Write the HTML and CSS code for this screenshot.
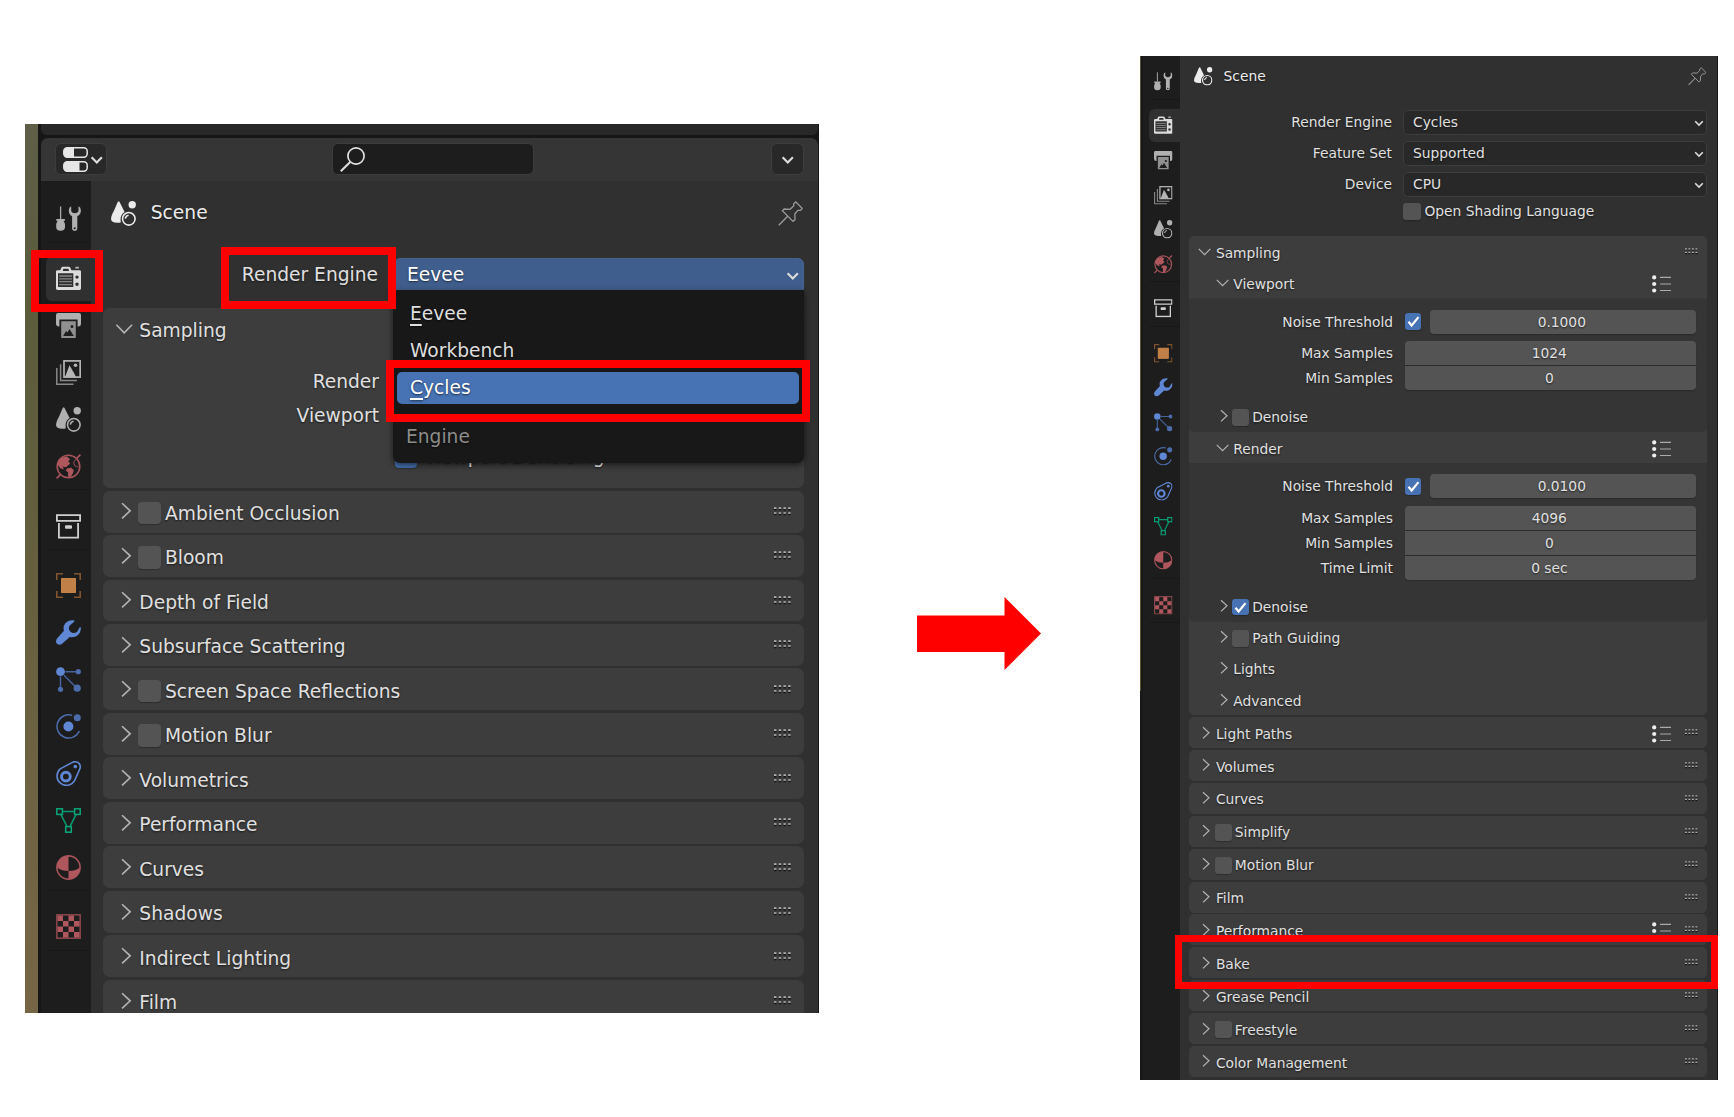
FILE: index.html
```html
<!DOCTYPE html>
<html lang="en">
<head>
    <meta charset="UTF-8">
    <meta name="viewport" content="width=device-width, initial-scale=1.0">
    <title>Render Engine - Cycles</title>
    <link rel="stylesheet" href="styles.css">
</head>
<body>
    <!-- icons -->
    <svg class="defs" width="0" height="0">
        <symbol id="right" viewBox="0 0 12 12" overflow="visible"><path d="M3 .2 L9 5.8 L3 11.4" fill="none" stroke="#b4b4b4" stroke-width="1.2"/></symbol>
        <symbol id="down" viewBox="0 0 12 12" overflow="visible"><path d="M-1.2 2.8 L4.6 8.7 L10.4 2.8" fill="none" stroke="#b4b4b4" stroke-width="1.2"/></symbol>
        <symbol id="arrow" viewBox="0 0 10 10"><path d="M1.2 3.2 L5 7 L8.8 3.2" fill="none" stroke="#dcdcdc" stroke-width="1.6"/></symbol>
        <symbol id="check" viewBox="0 0 16 16"><path d="M3.4 8.4 L6.4 12 L13 4" fill="none" stroke="#fff" stroke-width="2.1"/></symbol>
        <symbol id="grip" viewBox="0 0 13 7">
            <path d="M0 2H13M0 5.6H13" stroke="#161616" stroke-width="1.2" stroke-dasharray="1.8 1.7"/>
            <path d="M0 .8H13M0 4.4H13" stroke="#b0b0b0" stroke-width="1.2" stroke-dasharray="1.8 1.7"/>
        </symbol>
        <symbol id="list" viewBox="0 0 19 18">
            <g fill="#eee"><circle cx="2.2" cy="2.4" r="2.1"/><circle cx="2.2" cy="9" r="2.1"/><circle cx="2.2" cy="15.5" r="2.1"/></g>
            <path d="M8 2.4H19M8 9H19M8 15.5H19" stroke="#aaa" stroke-width="1.2"/>
        </symbol>
        <symbol id="editor" viewBox="0 0 25 25">
            <g fill="none" stroke="#e6e6e6" stroke-width="1.5"><rect x=".8" y=".8" width="23.4" height="9.4" rx="3.4"/><rect x=".8" y="14.8" width="23.4" height="9.4" rx="3.4"/></g>
            <path d="M4 .8H11V10.2H4Q.8 10 .8 5.5Q.8 1 4 .8ZM4 14.8H16.5V24.2H4Q.8 24 .8 19.5Q.8 15 4 14.8Z" fill="#e6e6e6"/>
        </symbol>
        <symbol id="search" viewBox="0 0 25 25"><circle cx="16" cy="9" r="8.1" fill="none" stroke="#e0e0e0" stroke-width="1.7"/><path d="M10.2 15 L.8 24.2" stroke="#e0e0e0" stroke-width="2"/></symbol>
        <symbol id="pin" viewBox="0 0 25 25">
            <path d="M17.8 1 L24.2 7.3 L22.6 9.3 L19.8 9.3 L16.8 13 L17 18.6 L15 20.4 L4.4 9.8 L6.2 8 L12 8.3 L15.7 5 L15.7 2.8 Z" fill="none" stroke="#999" stroke-width="1.3"/>
            <path d="M9.6 15.2 L.8 24.2" stroke="#999" stroke-width="1.4"/>
        </symbol>
        <symbol id="tool" viewBox="0 0 25 25">
            <path d="M4.6 .5V13" stroke="#aaa" stroke-width="1.3"/>
            <path d="M.3 13H8.9V14.8H7.6L9 18V21Q9 24.8 4.6 24.8Q.2 24.8 .2 21V18L1.6 14.8H.3Z" fill="#b0b0b0"/>
            <path fill-rule="evenodd" d="M15.2 .2Q12.8 1.2 12.8 4.6Q12.8 8.6 16.1 10.2V22.2Q16.2 24.8 18.7 24.8Q21.2 24.8 21.3 22.2V10.2Q24.9 8.6 24.9 4.6Q24.9 1.2 22.5 .2V5.2Q21.5 7.2 18.8 7.2Q16.2 7.2 15.2 5.2ZM18.7 21.2A1 1 0 1 1 18.7 23.2A1 1 0 1 1 18.7 21.2Z" fill="#b0b0b0"/>
        </symbol>
        <symbol id="render" viewBox="0 0 25 25">
            <path fill-rule="evenodd" d="M1.5 4.2H4.3L5.5 1.5Q5.8 .8 6.8 .8H12.8Q13.8 .8 14.2 1.5L15.4 4.2H23.5Q25 4.2 25 5.6V22.6Q25 24 23.5 24H1.5Q0 24 0 22.6V5.6Q0 4.2 1.5 4.2ZM7.3 2.8L6.8 5H13L12.5 2.8ZM2 7.2V21H17.3V7.2ZM21 9.4A1.7 1.7 0 1 0 21 12.8A1.7 1.7 0 1 0 21 9.4ZM21 16.6A1.7 1.7 0 1 0 21 20A1.7 1.7 0 1 0 21 16.6Z" fill="#dcdcdc"/>
            <path d="M3.2 10H16M3.2 12.8H16M3.2 15.6H16M3.2 18.6H16" stroke="#858585" stroke-width="1.3"/>
            <rect x="19.3" y=".8" width="3.6" height="1.7" fill="#b5b5b5"/>
        </symbol>
        <symbol id="output" viewBox="0 0 25 25">
            <path d="M2 0H23Q25 0 25 2V10.5Q25 13.5 22 13.5H21.6V6.5H3.4V13.5H3Q0 13.5 0 10.5V2Q0 0 2 0Z" fill="#b0b0b0"/>
            <path fill-rule="evenodd" d="M5.2 8.2H19.8V25H5.2ZM7.2 23H17.8L13.5 16L11.5 19.5L10 18ZM16 12A1.5 1.5 0 1 0 16 15A1.5 1.5 0 1 0 16 12Z" fill="#909090"/>
        </symbol>
        <symbol id="layers" viewBox="0 0 25 25">
            <rect x="8" y=".9" width="16.2" height="16.2" fill="none" stroke="#b5b5b5" stroke-width="1.7"/>
            <path d="M9 17L13.5 5.2L18 13L20 17Z" fill="#b5b5b5"/><circle cx="19.5" cy="5.3" r="1.8" fill="#b5b5b5"/>
            <path d="M4.6 4.2V20.6H21M.8 8V24.2H17.5" fill="none" stroke="#888" stroke-width="1.5"/>
        </symbol>
        <symbol id="scene" viewBox="0 0 25 25">
            <path d="M7.6 .3Q8.5 .3 9.2 2.2L13.6 11Q9.2 13.8 9.6 19.2L9.8 21.5Q0 22.5 0 18Q0 15 3.3 9L6.4 1.8Q6.8 .3 7.6 .3Z" fill="currentColor"/>
            <circle cx="21.2" cy="3.8" r="3.7" fill="currentColor"/>
            <circle cx="17.8" cy="17.8" r="6.3" fill="none" stroke="currentColor" stroke-width="1.6"/>
            <path d="M14.3 17.6Q14.8 14.6 17.6 14.2" fill="none" stroke="currentColor" stroke-width="1.6"/>
        </symbol>
        <symbol id="world" viewBox="0 0 25 25">
            <circle cx="12.5" cy="12.5" r="11.3" fill="none" stroke="#a6545a" stroke-width="1.6"/>
            <path d="M.6 24.4L4.6 20.4M20.4 4.6L24.4 .6" stroke="#a6545a" stroke-width="1.7"/>
            <path d="M6 3.8L11 2.6L14 5.2L12.2 7.2L14.2 9.4L10 13.3L6.5 12.5L8.2 15.5L4 14L1.4 10Q2.4 6 6 3.8Z" fill="#b0575e"/>
            <path d="M11 14.4L15.2 13.8L17.8 16.2L16.8 19.5L14.5 23.2L12 22.5L12.2 18.4L9.8 16.4Z" fill="#b0575e"/>
            <path d="M20 5L17.5 8.5L19 12L22.5 13" fill="none" stroke="#7e4348" stroke-width="1.2"/>
        </symbol>
        <symbol id="collection" viewBox="0 0 25 25">
            <path d="M.9 1.2H24.1V6.9H.9ZM2.9 9V23.6H22.1V9" fill="none" stroke="#d0d0d0" stroke-width="1.8"/>
            <rect x="9" y="11.3" width="7" height="3.4" rx="1" fill="#d0d0d0"/>
        </symbol>
        <symbol id="object" viewBox="0 0 25 25">
            <rect x="5.6" y="5.6" width="13.8" height="13.8" fill="#c08048" stroke="#d08a4c"/>
            <path d="M.8 7V.8H7M18 .8H24.2V7M24.2 18V24.2H18M7 24.2H.8V18" fill="none" stroke="#80542f" stroke-width="1.6"/>
        </symbol>
        <symbol id="modifier" viewBox="0 0 25 25">
            <path d="M18.3 .3Q10 -.2 7.8 6Q7.2 8.6 8 10.8L1.2 18.3Q-1 21.5 1 23.8Q3.5 26 6.4 23.5L13.7 16.9Q17 17.6 19.8 16.4Q25 14 25 7.2L23.5 7.5L21 12Q17.5 13.8 14.8 12Q11.5 9 13.8 5.4L18.2 1.8Z" fill="#5f87d3"/>
        </symbol>
        <symbol id="particles" viewBox="0 0 25 25">
            <path d="M4.5 4.7H22M4.5 4.7V22M7 7.2L21 21.2" stroke="#45639c" stroke-width="1.5"/>
            <circle cx="4.5" cy="4.7" r="4.9" fill="#1d1d1d"/><circle cx="4.5" cy="4.7" r="4.4" fill="#5f87d3"/>
            <g fill="#4c6cab"><circle cx="22.3" cy="4.7" r="2.6"/><circle cx="4.5" cy="22.3" r="2.6"/><circle cx="21.2" cy="21.2" r="3.6"/></g>
        </symbol>
        <symbol id="physics" viewBox="0 0 25 25">
            <path d="M16.2 1.4A11.6 11.6 0 1 0 23.3 17" fill="none" stroke="#4c6cab" stroke-width="1.5"/>
            <circle cx="12.4" cy="12.5" r="5" fill="#5f87d3"/><circle cx="21.3" cy="3.8" r="3.5" fill="#4c6cab"/>
        </symbol>
        <symbol id="constraint" viewBox="0 0 25 25">
            <path d="M4.2 7.9L16 1.6Q19.5 -.3 22.5 1.9Q25 4 24 7.6L18.6 19.6A9.4 9.4 0 1 1 4.2 7.9Z" fill="none" stroke="#5f87d3" stroke-width="1.6"/>
            <circle cx="9.9" cy="15.6" r="4.4" fill="none" stroke="#5f87d3" stroke-width="2.9"/>
            <circle cx="19.3" cy="5.6" r="1.8" fill="#5f87d3"/>
        </symbol>
        <symbol id="data" viewBox="0 0 25 25">
            <path d="M3.5 3.5H21.5L12.5 21.5Z" fill="none" stroke="#08996f" stroke-width="1.6"/>
            <g fill="#1d1d1d" stroke="#08a87a" stroke-width="1.5"><rect x=".8" y=".8" width="5.6" height="5.6"/><rect x="18.6" y=".8" width="5.6" height="5.6"/><rect x="9.7" y="18.6" width="5.6" height="5.6"/></g>
        </symbol>
        <symbol id="material" viewBox="0 0 25 25">
            <circle cx="12.5" cy="12.5" r="11.6" fill="none" stroke="#a6545a" stroke-width="1.6"/>
            <path d="M12.5 1V16Q5.5 16 1 12.5Q1.5 1.5 12.5 1ZM12.5 16Q19.5 16 24 12.5Q23.5 23.5 12.5 24Z" fill="#b0575e"/>
        </symbol>
        <symbol id="texture" viewBox="0 0 25 25">
            <rect x=".8" y=".8" width="23.4" height="23.4" fill="none" stroke="#8c474c" stroke-width="1.5"/>
            <path d="M1.5 1.5H7V7H1.5ZM12.5 1.5H18V7H12.5ZM7 7H12.5V12.5H7ZM18 7H23.5V12.5H18ZM1.5 12.5H7V18H1.5ZM12.5 12.5H18V18H12.5ZM7 18H12.5V23.5H7ZM18 18H23.5V23.5H18Z" fill="#b0575e"/>
        </symbol>
    </svg>

    <div class="shot eevee">
        <div class="backdrop"></div>
        <div class="editor">
            <div class="topbar"></div>
            <div class="header">
                <div class="header-btn editor-type"><svg class="tico"><use href="#editor"/></svg><svg class="arr"><use href="#arrow"/></svg></div>
                <div class="search"><svg class="tico"><use href="#search"/></svg></div>
                <div class="header-btn options"><svg class="arr"><use href="#arrow"/></svg></div>
            </div>
            <div class="main">
                <div class="tabs">
                    <div class="tab"><svg><use href="#tool"/></svg></div>
                    <div class="sep"></div>
                    <div class="tab active"><svg><use href="#render"/></svg></div>
                    <div class="tab"><svg><use href="#output"/></svg></div>
                    <div class="tab"><svg><use href="#layers"/></svg></div>
                    <div class="tab"><svg><use href="#scene"/></svg></div>
                    <div class="tab"><svg><use href="#world"/></svg></div>
                    <div class="sep"></div>
                    <div class="tab"><svg><use href="#collection"/></svg></div>
                    <div class="sep"></div>
                    <div class="tab"><svg><use href="#object"/></svg></div>
                    <div class="tab"><svg><use href="#modifier"/></svg></div>
                    <div class="tab"><svg><use href="#particles"/></svg></div>
                    <div class="tab"><svg><use href="#physics"/></svg></div>
                    <div class="tab"><svg><use href="#constraint"/></svg></div>
                    <div class="tab"><svg><use href="#data"/></svg></div>
                    <div class="tab"><svg><use href="#material"/></svg></div>
                    <div class="sep"></div>
                    <div class="tab"><svg><use href="#texture"/></svg></div>
                    <div class="sep"></div>
                </div>
                <div class="content">
                    <div class="title"><svg><use href="#scene"/></svg><span>Scene</span><svg class="pin"><use href="#pin"/></svg></div>
                    <div class="prop engine">
                        <label>Render Engine</label>
                        <div class="select open">
                            <span>Eevee</span><svg class="arr"><use href="#arrow"/></svg>
                            <div class="menu">
                                <div class="item"><u>E</u>evee</div>
                                <div class="item">Workbench</div>
                                <div class="item selected"><u>C</u>ycles</div>
                                <div class="menu-title">Engine</div>
                            </div>
                        </div>
                    </div>
                    <div class="panel sampling">
                        <div class="row"><svg class="chev"><use href="#down"/></svg><span>Sampling</span></div>
                        <div class="sample-label">Render</div>
                        <div class="sample-label">Viewport</div>
                        <div class="denoising"><i class="box on"></i><span>Viewport Denoising</span></div>
                    </div>
                    <div class="panel row"><svg class="chev"><use href="#right"/></svg><i class="box"></i><span>Ambient Occlusion</span><svg class="grip"><use href="#grip"/></svg></div>
                    <div class="panel row"><svg class="chev"><use href="#right"/></svg><i class="box"></i><span>Bloom</span><svg class="grip"><use href="#grip"/></svg></div>
                    <div class="panel row"><svg class="chev"><use href="#right"/></svg><span>Depth of Field</span><svg class="grip"><use href="#grip"/></svg></div>
                    <div class="panel row"><svg class="chev"><use href="#right"/></svg><span>Subsurface Scattering</span><svg class="grip"><use href="#grip"/></svg></div>
                    <div class="panel row"><svg class="chev"><use href="#right"/></svg><i class="box"></i><span>Screen Space Reflections</span><svg class="grip"><use href="#grip"/></svg></div>
                    <div class="panel row"><svg class="chev"><use href="#right"/></svg><i class="box"></i><span>Motion Blur</span><svg class="grip"><use href="#grip"/></svg></div>
                    <div class="panel row"><svg class="chev"><use href="#right"/></svg><span>Volumetrics</span><svg class="grip"><use href="#grip"/></svg></div>
                    <div class="panel row"><svg class="chev"><use href="#right"/></svg><span>Performance</span><svg class="grip"><use href="#grip"/></svg></div>
                    <div class="panel row"><svg class="chev"><use href="#right"/></svg><span>Curves</span><svg class="grip"><use href="#grip"/></svg></div>
                    <div class="panel row"><svg class="chev"><use href="#right"/></svg><span>Shadows</span><svg class="grip"><use href="#grip"/></svg></div>
                    <div class="panel row"><svg class="chev"><use href="#right"/></svg><span>Indirect Lighting</span><svg class="grip"><use href="#grip"/></svg></div>
                    <div class="panel row"><svg class="chev"><use href="#right"/></svg><span>Film</span><svg class="grip"><use href="#grip"/></svg></div>
                </div>
            </div>
        </div>
        <div class="mark mark-tab"></div>
        <div class="mark mark-label"></div>
        <div class="mark mark-cycles"></div>
    </div>

    <svg class="next" viewBox="0 0 124 74"><path d="M0 18.5H87.5V0L124 36.5L87.5 73V55H0Z" fill="#f00"/></svg>

    <div class="shot cycles">
        <div class="main">
            <div class="tabs">
                <div class="tab"><svg><use href="#tool"/></svg></div>
                <div class="sep"></div>
                <div class="tab active"><svg><use href="#render"/></svg></div>
                <div class="tab"><svg><use href="#output"/></svg></div>
                <div class="tab"><svg><use href="#layers"/></svg></div>
                <div class="tab"><svg><use href="#scene"/></svg></div>
                <div class="tab"><svg><use href="#world"/></svg></div>
                <div class="sep"></div>
                <div class="tab"><svg><use href="#collection"/></svg></div>
                <div class="sep"></div>
                <div class="tab"><svg><use href="#object"/></svg></div>
                <div class="tab"><svg><use href="#modifier"/></svg></div>
                <div class="tab"><svg><use href="#particles"/></svg></div>
                <div class="tab"><svg><use href="#physics"/></svg></div>
                <div class="tab"><svg><use href="#constraint"/></svg></div>
                <div class="tab"><svg><use href="#data"/></svg></div>
                <div class="tab"><svg><use href="#material"/></svg></div>
                <div class="sep"></div>
                <div class="tab"><svg><use href="#texture"/></svg></div>
                <div class="sep"></div>
            </div>
            <div class="content">
                <div class="title"><svg><use href="#scene"/></svg><span>Scene</span><svg class="pin"><use href="#pin"/></svg></div>
                <div class="prop"><label>Render Engine</label><div class="select"><span>Cycles</span><svg class="arr"><use href="#arrow"/></svg></div></div>
                <div class="prop"><label>Feature Set</label><div class="select"><span>Supported</span><svg class="arr"><use href="#arrow"/></svg></div></div>
                <div class="prop"><label>Device</label><div class="select"><span>CPU</span><svg class="arr"><use href="#arrow"/></svg></div></div>
                <div class="osl"><i class="box"></i><span>Open Shading Language</span></div>

                <div class="panel sampling">
                    <div class="row"><svg class="chev"><use href="#down"/></svg><span>Sampling</span><svg class="grip"><use href="#grip"/></svg></div>
                    <div class="row sub"><svg class="chev"><use href="#down"/></svg><span>Viewport</span><svg class="list"><use href="#list"/></svg></div>
                    <div class="body">
                        <div class="field"><label>Noise Threshold</label><i class="box on"><svg><use href="#check"/></svg></i><div class="num">0.1000</div></div>
                        <div class="stack">
                            <div class="field"><label>Max Samples</label><div class="num">1024</div></div>
                            <div class="field"><label>Min Samples</label><div class="num">0</div></div>
                        </div>
                        <div class="row sub"><svg class="chev"><use href="#right"/></svg><i class="box"></i><span>Denoise</span></div>
                    </div>
                    <div class="row sub"><svg class="chev"><use href="#down"/></svg><span>Render</span><svg class="list"><use href="#list"/></svg></div>
                    <div class="body">
                        <div class="field"><label>Noise Threshold</label><i class="box on"><svg><use href="#check"/></svg></i><div class="num">0.0100</div></div>
                        <div class="stack">
                            <div class="field"><label>Max Samples</label><div class="num">4096</div></div>
                            <div class="field"><label>Min Samples</label><div class="num">0</div></div>
                            <div class="field"><label>Time Limit</label><div class="num">0 sec</div></div>
                        </div>
                        <div class="row sub"><svg class="chev"><use href="#right"/></svg><i class="box on"><svg><use href="#check"/></svg></i><span>Denoise</span></div>
                    </div>
                    <div class="row sub"><svg class="chev"><use href="#right"/></svg><i class="box"></i><span>Path Guiding</span></div>
                    <div class="row sub"><svg class="chev"><use href="#right"/></svg><span>Lights</span></div>
                    <div class="row sub"><svg class="chev"><use href="#right"/></svg><span>Advanced</span></div>
                </div>
                <div class="panel row"><svg class="chev"><use href="#right"/></svg><span>Light Paths</span><svg class="list"><use href="#list"/></svg><svg class="grip"><use href="#grip"/></svg></div>
                <div class="panel row"><svg class="chev"><use href="#right"/></svg><span>Volumes</span><svg class="grip"><use href="#grip"/></svg></div>
                <div class="panel row"><svg class="chev"><use href="#right"/></svg><span>Curves</span><svg class="grip"><use href="#grip"/></svg></div>
                <div class="panel row"><svg class="chev"><use href="#right"/></svg><i class="box"></i><span>Simplify</span><svg class="grip"><use href="#grip"/></svg></div>
                <div class="panel row"><svg class="chev"><use href="#right"/></svg><i class="box"></i><span>Motion Blur</span><svg class="grip"><use href="#grip"/></svg></div>
                <div class="panel row"><svg class="chev"><use href="#right"/></svg><span>Film</span><svg class="grip"><use href="#grip"/></svg></div>
                <div class="panel row"><svg class="chev"><use href="#right"/></svg><span>Performance</span><svg class="list"><use href="#list"/></svg><svg class="grip"><use href="#grip"/></svg></div>
                <div class="panel row"><svg class="chev"><use href="#right"/></svg><span>Bake</span><svg class="grip"><use href="#grip"/></svg></div>
                <div class="panel row"><svg class="chev"><use href="#right"/></svg><span>Grease Pencil</span><svg class="grip"><use href="#grip"/></svg></div>
                <div class="panel row"><svg class="chev"><use href="#right"/></svg><i class="box"></i><span>Freestyle</span><svg class="grip"><use href="#grip"/></svg></div>
                <div class="panel row"><svg class="chev"><use href="#right"/></svg><span>Color Management</span><svg class="grip"><use href="#grip"/></svg></div>
            </div>
        </div>
        <div class="mark mark-bake"></div>
    </div>
</body>
</html>
```
FILE: styles.css
```css
* {
    box-sizing: border-box;
}
body {
    margin: 0;
    width: 1734px;
    height: 1117px;
    background: #fff;
    display: flex;
    align-items: flex-start;
    overflow: hidden;
    font-family: "DejaVu Sans", sans-serif;
    color: #e0e0e0;
}
svg {
    display: block;
    flex: none;
    overflow: visible;
}
.defs {
    position: absolute;
}
/* --u is one interface unit, the left shot is zoomed in */
.shot {
    --u: 1px;
    position: relative;
    flex: none;
    display: flex;
    font-size: calc(13.8 * var(--u));
    line-height: 1.164;
    text-shadow: 0 1px 2px rgba(0, 0, 0, 0.6);
    white-space: nowrap;
}
.eevee {
    --u: 1.352px;
    width: 794px;
    height: 889px;
    margin: 124px 0 0 25px;
}
.cycles {
    width: 578px;
    height: 1024px;
    margin: 56px 0 0 99px;
    background: linear-gradient(#56523a, #5d5434) 0 0 / 1px 635px no-repeat #161616;
    padding: 0 1px 0 1px;
}
.next {
    width: 124px;
    height: 74px;
    margin: 597px 0 0 98px;
}
.backdrop {
    width: 13px;
    background: linear-gradient(#5f5f49, #5a5c3c 20%, #655f3e 50%, #766646);
}
.editor {
    flex: 1;
    display: flex;
    flex-direction: column;
    background: #161616;
    padding: 0 1px 0 3px;
    overflow: hidden;
}
.topbar {
    height: 11px;
    margin-bottom: 3px;
    background: #282828;
    border-radius: 0 0 6px 6px;
    flex: none;
}
.header {
    height: 43px;
    flex: none;
    display: flex;
    align-items: center;
    background: #353535;
    border-radius: 7px 7px 0 0;
    padding: 0 14px 1px 14px;
}
.header-btn, .search {
    height: 32px;
    display: flex;
    align-items: center;
    background: #282828;
    border: 1px solid #3d3d3d;
    border-radius: 6px;
}
.editor-type {
    width: 52px;
    padding-left: 7px;
}
.editor-type .arr {
    margin: 2px 0 0 2px;
}
.search {
    width: 202px;
    margin: 0 auto 0 225px;
    padding-left: 7px;
    background: #1d1d1d;
}
.options {
    width: 33px;
    justify-content: center;
}
.options .arr {
    margin-top: 2px;
}
.tico {
    width: 25px;
    height: 25px;
}
.arr {
    width: calc(10 * var(--u));
    height: calc(10 * var(--u));
}
.main {
    flex: 1;
    display: flex;
    min-height: 0;
    overflow: hidden;
}
.tabs {
    flex: none;
    width: 50px;
    padding: 14.4px 0 0 5px;
    background: #1d1d1d;
}
.cycles .tabs {
    width: 39px;
    padding: 8px 0 0 6px;
    border-left: 2px solid #181818;
}
.tab {
    height: calc(34.65 * var(--u));
    display: flex;
    align-items: center;
    padding-left: calc(7.2 * var(--u));
    color: #b0b0b0;
}
.cycles .tab {
    padding-left: 5.3px;
}
.tab svg, .title svg {
    width: calc(18.5 * var(--u));
    height: calc(18.5 * var(--u));
}
.tab.active {
    background: #303030;
    border-radius: 6px 0 0 6px;
    height: calc(32.6 * var(--u));
    margin: calc(1 * var(--u)) 0;
}
.sep {
    height: calc(9.7 * var(--u));
    border-top: 1px solid #181818;
}
.content {
    flex: 1;
    min-width: 0;
    background: #303030;
    padding: 0 14px 0 12px;
}
.cycles .content {
    padding: 0 10px 0 9px;
}
.title {
    display: flex;
    align-items: center;
    height: 57px;
    padding: 7px 0 0 7.5px;
    margin-bottom: 20px;
    color: #ececec;
}
.cycles .title {
    height: 41px;
    padding: 0 0 0 4.8px;
    margin-bottom: 13px;
}
.title span {
    margin-left: calc(11.3 * var(--u));
}
.title .pin {
    margin-left: auto;
    margin-right: 1px;
}
.prop {
    display: flex;
    align-items: center;
    height: 24.5px;
    margin-bottom: 6.6px;
}
.prop label {
    width: 203px;
    text-align: right;
}
.select {
    flex: 1;
    height: 100%;
    margin-left: 11px;
    display: flex;
    align-items: center;
    justify-content: space-between;
    padding: 0 2.5px 0 9px;
    background: #282828;
    border: 1px solid #3d3d3d;
    border-radius: 5px;
}
.select .arr {
    margin-top: 2px;
}
.engine {
    height: 32px;
    margin: 0 0 18px;
}
.engine label {
    width: 275px;
    padding-top: 1px;
}
.select.open {
    position: relative;
    margin-left: 16px;
    padding: 1px 3px 0 12px;
    background: #405e8d;
    border-color: #47628c;
    border-radius: 6px 6px 0 0;
    color: #fff;
}
.menu {
    position: absolute;
    z-index: 2;
    left: -2px;
    right: -1px;
    top: 31px;
    height: 173px;
    padding: 7px 5px 0 4px;
    background: #181818;
    border-radius: 0 0 7px 7px;
    box-shadow: 0 2px 6px rgba(0, 0, 0, 0.6);
    color: #dedede;
}
.item {
    height: 32px;
    margin-bottom: 5.4px;
    padding: 5.6px 0 0 13px;
    border-radius: 5px;
}
.item u {
    text-decoration-thickness: 1.5px;
    text-underline-offset: 4px;
}
.item.selected {
    background: #4772b3;
    color: #fff;
}
.menu-title {
    padding: 17px 0 0 9px;
    color: #8c8c8c;
}
.panel {
    background: #3d3d3d;
    border-radius: calc(5 * var(--u));
    margin-bottom: calc(1.9 * var(--u));
}
.row {
    height: calc(31 * var(--u));
    display: flex;
    align-items: center;
    padding: 0 calc(9 * var(--u)) 0 calc(11.3 * var(--u));
}
.row span {
    margin: calc(2.2 * var(--u)) 0 0 calc(0.9 * var(--u));
}
.eevee .row span {
    margin-top: 4.4px;
}
.row .box {
    margin: calc(2.2 * var(--u)) calc(2.4 * var(--u)) 0 0;
}
.chev {
    width: calc(12 * var(--u));
    height: calc(12 * var(--u));
    margin-right: calc(2.7 * var(--u));
}
.grip {
    width: calc(13 * var(--u));
    height: calc(7 * var(--u));
    margin-left: auto;
}
.list {
    width: 19px;
    height: 18px;
    margin: 3px 0 0 auto;
}
.list + .grip {
    margin-left: 14px;
}
.box {
    flex: none;
    width: calc(16.6 * var(--u));
    height: calc(16.6 * var(--u));
    background: #545454;
    border-radius: calc(3 * var(--u));
    box-shadow: 0 1px 1px rgba(0, 0, 0, 0.25);
}
.box.on {
    background: #4772b3;
}
.box svg {
    width: 100%;
    height: 100%;
}
.eevee .sampling {
    height: 180px;
    margin-bottom: 2.6px;
    overflow: hidden;
}
.sample-label {
    width: 276px;
    text-align: right;
    height: 34px;
}
.eevee .sampling .row {
    margin-bottom: 20.6px;
}
.denoising {
    display: flex;
    align-items: center;
    padding: 7px 0 0 292px;
}
.denoising span {
    margin-left: 6px;
    color: #fff;
}
.osl {
    display: flex;
    align-items: center;
    height: 18px;
    margin: -1px 0 16px 214px;
}
.osl .box {
    width: 17.5px;
    height: 17.5px;
}
.osl span {
    margin-left: 4px;
}
.row.sub {
    height: 31.2px;
    padding: 0 36px 0 28.7px;
}
.body {
    background: #353535;
    padding-top: 11.3px;
    border-radius: 0 0 5px 5px;
}
.field {
    display: flex;
    align-items: center;
    height: 24px;
    padding-right: 11px;
}
.field label {
    width: 204px;
    text-align: right;
    margin-right: 11.7px;
}
.field .box {
    margin-right: 8.3px;
}
.num {
    flex: 1;
    height: 100%;
    display: flex;
    align-items: center;
    justify-content: center;
    padding-right: 2px;
    background: #545454;
    border-radius: 4px;
    box-shadow: 0 1px 1px rgba(0, 0, 0, 0.2);
}
.stack {
    display: flex;
    flex-direction: column;
    gap: 1px;
    margin: 7.3px 0 10.7px;
}
.stack .num {
    border-radius: 0;
}
.stack .field:first-child .num {
    border-radius: 4px 4px 0 0;
}
.stack .field:last-child .num {
    border-radius: 0 0 4px 4px;
}
/* red highlights */
.mark {
    position: absolute;
    z-index: 5;
    border: 8px solid #f00;
}
.mark-tab {
    left: 6px;
    top: 126px;
    width: 72px;
    height: 62px;
}
.mark-label {
    left: 196px;
    top: 123px;
    width: 175px;
    height: 62px;
}
.mark-cycles {
    left: 361px;
    top: 236px;
    width: 424px;
    height: 62px;
}
.mark-bake {
    left: 35px;
    top: 879px;
    width: 543px;
    height: 54px;
    border-width: 7px;
}
```
